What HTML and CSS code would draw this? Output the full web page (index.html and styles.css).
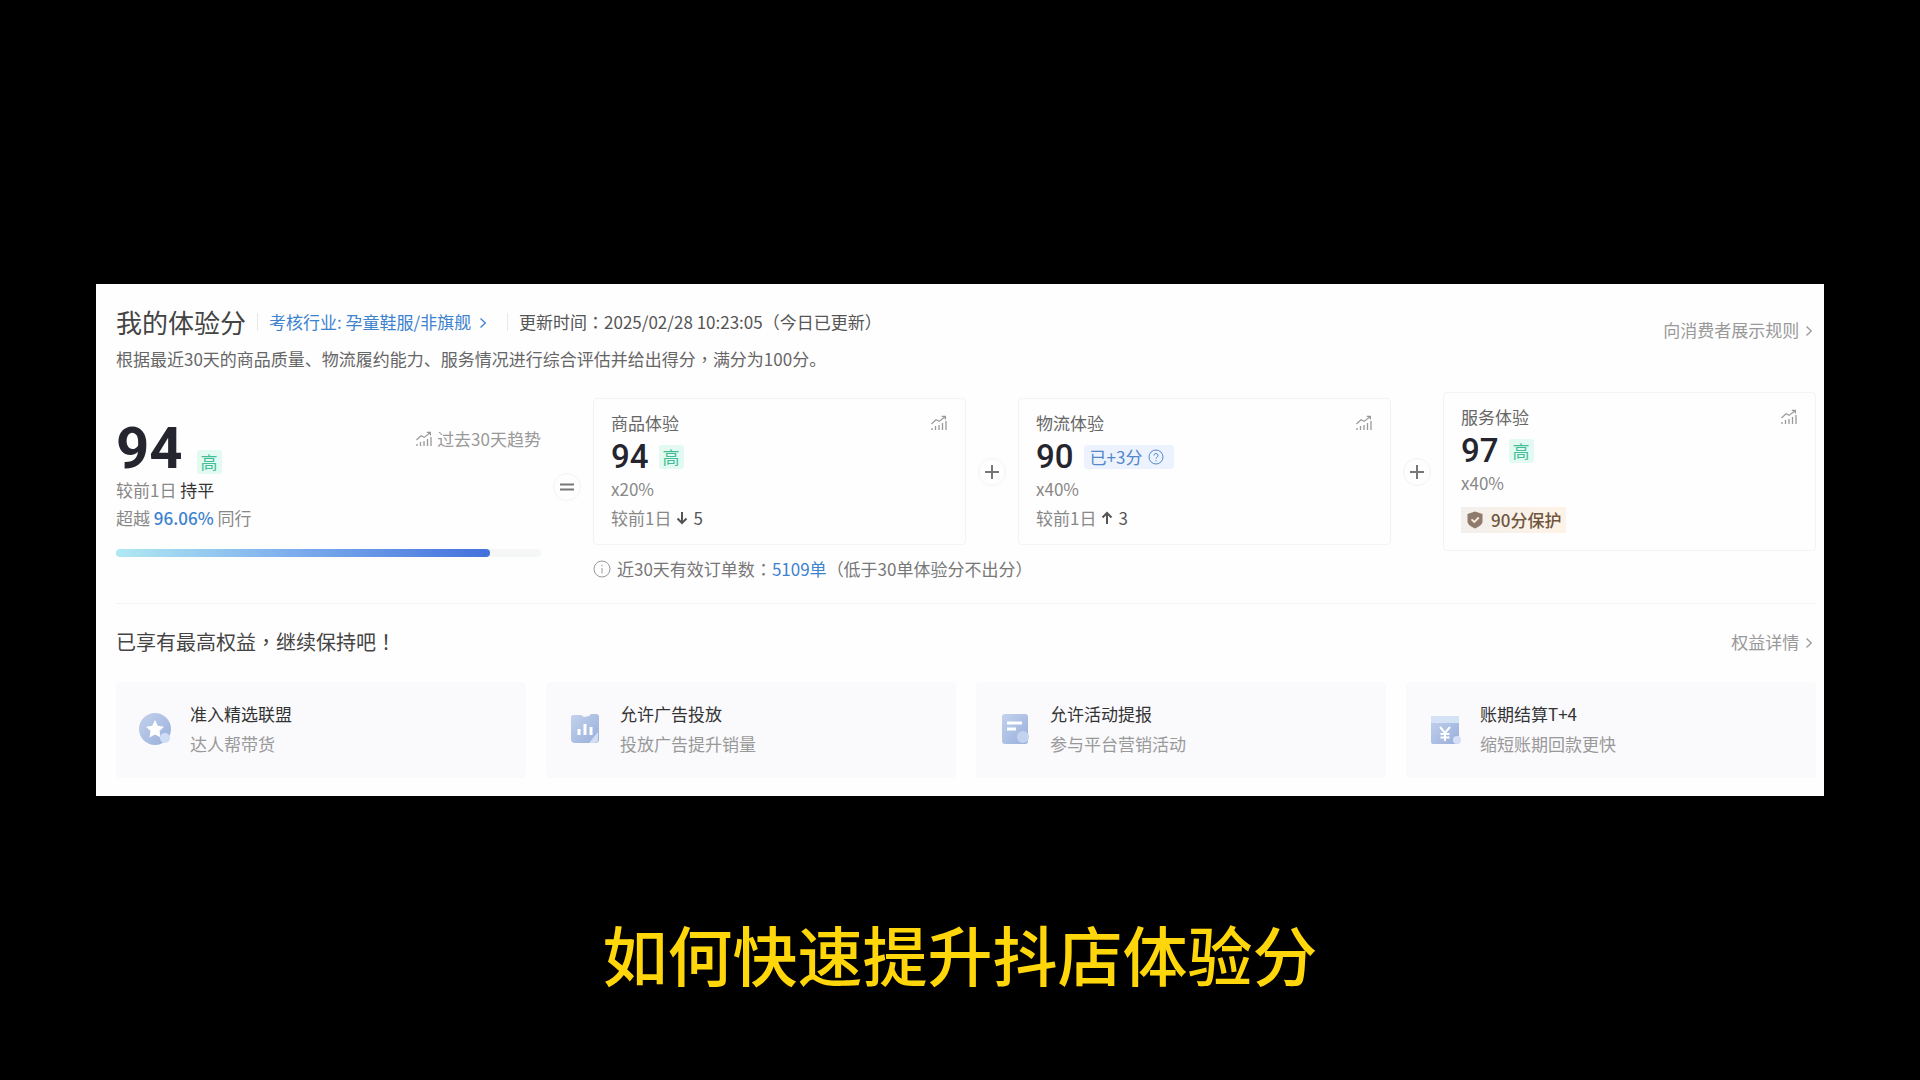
FILE: index.html
```html
<!DOCTYPE html>
<html lang="zh-CN">
<head>
  <meta charset="UTF-8">
  <meta name="viewport" content="width=device-width, initial-scale=1.0">
  <title>如何快速提升抖店体验分</title>
  <link rel="stylesheet" href="styles.css">
</head>
<body>
  <!-- 公用图标 -->
  <svg class="sprite" aria-hidden="true">
    <symbol id="icon-trend" viewBox="0 0 18 16">
      <path d="M1.5 9 6 4.8l3.2 1.6L15 1.8M11.8 1.4h3.6v3.2" fill="none" stroke="currentColor" stroke-width="1.2"/>
      <path d="M2 13v2M5.5 11v4M9 10v5M12.5 8v7M16 6v9" fill="none" stroke="currentColor" stroke-width="1.3"/>
    </symbol>
    <symbol id="icon-arrow" viewBox="0 0 8 12">
      <path d="m1.5 1.500 4.800 4.500-4.800 4.500" fill="none" stroke="currentColor" stroke-width="1.3"/>
    </symbol>
  </svg>

  <main class="panel">
    <header class="header">
      <div>
        <div class="title-row">
          <h1>我的体验分</h1>
          <a class="industry" href="#">考核行业: 孕童鞋服/非旗舰 <svg class="arrow"><use href="#icon-arrow"/></svg></a>
          <span class="update">更新时间<span class="punct" lang="zh-TW">：</span>2025/02/28 10:23:05（今日已更新）</span>
        </div>
        <p class="desc">根据最近30天的商品质量、物流履约能力、服务情况进行综合评估并给出得分<span class="punct" lang="zh-TW">，</span>满分为100分。</p>
      </div>
      <a class="more rule" href="#">向消费者展示规则 <svg class="arrow"><use href="#icon-arrow"/></svg></a>
    </header>

    <section class="scores">
      <div class="overall">
        <div class="overall-top">
          <span class="total">94</span>
          <span class="tag">高</span>
          <a class="trend" href="#"><svg class="trend-icon"><use href="#icon-trend"/></svg>过去30天趋势</a>
        </div>
        <p>较前1日 <span class="dark">持平</span></p>
        <p>超越 <b>96.06%</b> 同行</p>
        <div class="bar"><div class="bar-fill" style="width: 88%"></div></div>
      </div>

      <div class="sign"><span>
        <svg viewBox="0 0 16 16"><path d="M1 5.500h14M1 10.500h14"/></svg>
      </span></div>

      <div class="breakdown">
        <div class="cards">
          <article class="card">
            <div class="card-title"><h2>商品体验</h2><svg class="trend-icon"><use href="#icon-trend"/></svg></div>
            <div class="card-score"><strong>94</strong><span class="tag">高</span></div>
            <p>x20%</p>
            <p class="change">较前1日 <svg viewBox="0 0 12 14"><path d="M6 1v11M1.500 7.500 6 12l4.500-4.500"/></svg> <span>5</span></p>
          </article>
          <div class="sign"><span>
            <svg viewBox="0 0 16 16"><path d="M1 8h14M8 1v14"/></svg>
          </span></div>
          <article class="card">
            <div class="card-title"><h2>物流体验</h2><svg class="trend-icon"><use href="#icon-trend"/></svg></div>
            <div class="card-score"><strong>90</strong><span class="tag bonus">已+3分
              <svg viewBox="0 0 16 16"><circle cx="8" cy="8" r="7"/><path d="M6 6.500a2 2 0 1 1 2.800 1.800Q8 8.700 8 9.700M8 11v1.200"/></svg></span></div>
            <p>x40%</p>
            <p class="change">较前1日 <svg viewBox="0 0 12 14"><path d="M6 13V2M1.500 6.500 6 2l4.500 4.500"/></svg> <span>3</span></p>
          </article>
          <div class="sign"><span>
            <svg viewBox="0 0 16 16"><path d="M1 8h14M8 1v14"/></svg>
          </span></div>
          <article class="card">
            <div class="card-title"><h2>服务体验</h2><svg class="trend-icon"><use href="#icon-trend"/></svg></div>
            <div class="card-score"><strong>97</strong><span class="tag">高</span></div>
            <p>x40%</p>
            <div class="protect">
              <svg viewBox="0 0 16 18"><path d="M8 .5 15.500 3v7.500c0 3-3.500 5.300-7.500 7-4-1.700-7.500-4-7.500-7V3z" fill="#8f7b6c"/><path d="m4.500 8.300 2.800 2.700 4.500-4.500" fill="none" stroke="#f7ece1" stroke-width="1.800"/></svg>
              90分保护
            </div>
          </article>
        </div>
        <p class="orders">
          <svg viewBox="0 0 18 18"><circle cx="9" cy="9" r="8"/><path d="M9 8v5.500M9 4.800v1.500"/></svg>
          近30天有效订单数<span class="punct" lang="zh-TW">：</span><a href="#">5109单</a>（低于30单体验分不出分）
        </p>
      </div>
    </section>

    <section class="benefits">
      <div class="benefits-head">
        <h2>已享有最高权益<span class="punct" lang="zh-TW">，</span>继续保持吧<span class="punct" lang="zh-TW">！</span></h2>
        <a class="more" href="#">权益详情 <svg class="arrow"><use href="#icon-arrow"/></svg></a>
      </div>
      <div class="benefit-list">
        <div class="benefit">
          <svg viewBox="0 0 34 34">
            <defs><linearGradient id="blue" x1="0" y1="0" x2="1" y2="1"><stop offset="0" stop-color="#c3d2ed"/><stop offset="1" stop-color="#98aedb"/></linearGradient></defs>
            <circle cx="17" cy="17" r="16" fill="url(#blue)"/>
            <path d="m17 8 2.800 5.800 6.200.9-4.500 4.400 1.100 6.400-5.600-3-5.600 3 1.100-6.400L8 14.700l6.200-.9z" fill="#fff"/>
            <circle cx="27" cy="26" r="5" fill="#cfdcf5"/>
          </svg>
          <div><h3>准入精选联盟</h3><p>达人帮带货</p></div>
        </div>
        <div class="benefit">
          <svg viewBox="0 0 34 34">
            <path d="M5 3h8l3 2 5-1 2-2h5q3 0 3 3v22q0 4-4 4H7q-4 0-4-4V6q0-3 2-3z" fill="url(#blue)"/>
            <path d="M30 20v7q0 4-4 4h-5z" fill="#d3def5"/>
            <path d="M11 17v6M17 12v11M23 15v8" stroke="#fff" stroke-width="3"/>
          </svg>
          <div><h3>允许广告投放</h3><p>投放广告提升销量</p></div>
        </div>
        <div class="benefit">
          <svg viewBox="0 0 34 34">
            <rect x="4" y="2" width="26" height="30" rx="3" fill="url(#blue)"/>
            <path d="M9 11h15M9 17h9" stroke="#fff" stroke-width="3"/>
            <circle cx="25" cy="25" r="6" fill="#c3d2ee"/>
          </svg>
          <div><h3>允许活动提报</h3><p>参与平台营销活动</p></div>
        </div>
        <div class="benefit">
          <svg viewBox="0 0 34 34">
            <rect x="3" y="4" width="28" height="28" rx="2" fill="url(#blue)"/>
            <path d="M3 4h28v7H3z" fill="#d5e2f6"/>
            <path d="m12 15 5 6 5-6M17 21v8M12.500 22h9M12.500 25.500h9" fill="none" stroke="#fff" stroke-width="2"/>
            <circle cx="29" cy="28" r="4" fill="#d5e0f7"/>
          </svg>
          <div><h3>账期结算T+4</h3><p>缩短账期回款更快</p></div>
        </div>
      </div>
    </section>
  </main>

  <p class="caption">如何快速提升抖店体验分</p>
</body>
</html>
```
FILE: styles.css
```css
* {
  box-sizing: border-box;
}
body {
  margin: 0;
  padding-top: 284px;
  background: #000;
  color: #888;
  font-family: "Noto Sans CJK SC", sans-serif;
  font-size: 17px;
  line-height: 24px;
}
h1, h2, h3, p {
  margin: 0;
  font-weight: 400;
}
a {
  color: #3d82cf;
  text-decoration: none;
}
.sprite {
  display: none;
}
/* 居中的全角标点 */
.punct {
  font-family: "Noto Sans CJK TC", sans-serif;
}
.panel {
  margin: 0 5%;
  padding: 20px 8px 18px 20px;
  background: #fefefe;
}

/* 顶部 */
.header {
  display: flex;
  justify-content: space-between;
  align-items: flex-start;
}
.title-row {
  display: flex;
  align-items: center;
  height: 36px;
}
h1 {
  color: #444;
  font-size: 26px;
  line-height: 34px;
}
.industry,
.update {
  margin-left: 11px;
  padding-left: 12px;
  background: linear-gradient(#e8e8e8, #e8e8e8) left center / 1px 18px no-repeat;
}
.industry {
  padding-right: 9px;
}
.update {
  color: #555;
}
.arrow {
  width: 8px;
  height: 12px;
  margin-left: 4px;
}
.desc {
  margin: 7px 0 1px;
  color: #666;
}
.more {
  padding-right: 3px;
  color: #999;
}
.more .arrow {
  margin-left: 2px;
}
.rule {
  padding-top: 14px;
}

/* 分数 */
.scores {
  display: flex;
  align-items: center;
  margin-top: 20px;
  padding-bottom: 22px;
  border-bottom: 1px solid #f3f3f3;
}
.overall {
  flex: 0 0 25%;
  align-self: flex-start;
  padding-top: 27px;
}
.overall > p {
  line-height: 28px;
}
.overall-top {
  display: flex;
  align-items: flex-end;
  height: 57px;
}
.total {
  color: #25252f;
  font: 700 58px/56px Roboto, sans-serif;
}
.overall .tag {
  margin: 0 0 2px 14px;
}
.trend {
  display: flex;
  align-items: center;
  align-self: flex-start;
  gap: 4px;
  margin: 8px 0 0 auto;
  color: #999;
}
.trend-icon {
  width: 18px;
  height: 16px;
  color: #999;
}
.dark {
  color: #333;
}
.overall b {
  color: #3d82cf;
  font-weight: 500;
}
.bar {
  height: 8px;
  margin-top: 17px;
  border-radius: 4px;
  background: #f5f7f7;
}
.bar-fill {
  height: 8px;
  border-radius: 4px;
  background: linear-gradient(90deg, #b0e9f3, #7fb0ed 45%, #4470dc);
}
.tag {
  padding: 0 4px;
  border-radius: 3px;
  background: #e2faf2;
  color: #43bd95;
}
.sign {
  flex: 0 0 52px;
  display: flex;
  justify-content: center;
}
.sign span {
  display: flex;
  align-items: center;
  justify-content: center;
  width: 28px;
  height: 28px;
  border: 1px solid #f3f3f3;
  border-radius: 50%;
}
.sign svg {
  width: 16px;
  height: 16px;
  fill: none;
  stroke: #777;
  stroke-width: 2;
}
.breakdown {
  flex: 1;
}
.cards {
  display: flex;
  align-items: center;
}
.card {
  flex: 1;
  padding: 12px 17px 14px;
  border: 1px solid #f3f3f3;
  border-radius: 4px;
}
.card-title {
  display: flex;
  justify-content: space-between;
  align-items: center;
}
.card h2 {
  color: #666;
  font-size: 17px;
}
.card-score {
  display: flex;
  align-items: center;
  gap: 10px;
  height: 40px;
  margin-top: 2px;
}
.card strong {
  color: #25252f;
  font: 500 33px/40px Roboto, sans-serif;
}
.bonus {
  display: flex;
  align-items: center;
  gap: 6px;
  padding: 0 10px 0 6px;
  background: #edf3fe;
  color: #5287c9;
}
.bonus svg {
  width: 16px;
  height: 16px;
  fill: none;
  stroke: currentColor;
}
.change {
  display: flex;
  align-items: center;
  gap: 5px;
  margin-top: 5px;
}
.change svg {
  width: 12px;
  height: 14px;
  fill: none;
  stroke: #555;
  stroke-width: 2;
}
.change span {
  color: #555;
}
.protect {
  display: inline-flex;
  align-items: center;
  gap: 8px;
  height: 26px;
  margin: 12px 0 3px;
  padding: 0 5px 0 6px;
  background: linear-gradient(90deg, #f3efec, #fef3e6);
  color: #6f5640;
  font-weight: 500;
  vertical-align: top;
}
.protect svg {
  width: 16px;
  height: 18px;
}
.orders {
  display: flex;
  align-items: center;
  margin-top: 6px;
  color: #777;
}
.orders svg {
  width: 18px;
  height: 18px;
  margin-right: 6px;
  fill: none;
  stroke: #999;
}

/* 权益 */
.benefits-head {
  display: flex;
  justify-content: space-between;
  align-items: center;
  margin: 24px 0 26px;
}
.benefits-head h2 {
  color: #444;
  font-size: 20px;
  line-height: 28px;
}
.benefit-list {
  display: grid;
  grid-template-columns: repeat(4, 1fr);
  gap: 20px;
}
.benefit {
  display: flex;
  align-items: center;
  gap: 18px;
  height: 96px;
  padding: 0 22px 2px;
  border-radius: 4px;
  background: #fafafd;
}
.benefit svg {
  width: 34px;
  height: 34px;
}
.benefit h3 {
  color: #333;
  font-size: 17px;
}
.benefit p {
  margin-top: 6px;
  color: #999;
}

/* 字幕 */
.caption {
  margin: 117px 0 40px;
  color: #ffd60a;
  font-size: 65px;
  font-weight: 500;
  line-height: 80px;
  text-align: center;
}
```
